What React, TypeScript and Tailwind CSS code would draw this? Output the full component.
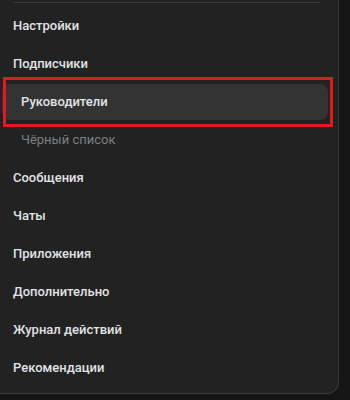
const items: { label: string; sub?: boolean; active?: boolean; muted?: boolean }[] = [
  { label: 'Настройки' },
  { label: 'Подписчики' },
  { label: 'Руководители', sub: true, active: true },
  { label: 'Чёрный список', sub: true, muted: true },
  { label: 'Сообщения' },
  { label: 'Чаты' },
  { label: 'Приложения' },
  { label: 'Дополнительно' },
  { label: 'Журнал действий' },
  { label: 'Рекомендации' },
];

export default function App() {
  return (
    <div className="w-[350px] h-[400px] bg-[#161616] overflow-hidden" style={{ fontFamily: 'Roboto, "Noto Sans", sans-serif' }}>
      <div className="w-[339px] h-[394px] bg-[#222222] border-r border-b border-[#3a3a3a] rounded-br-[12px] pt-[2px] pl-[2px] pr-[10px]">
        <div className="ml-[11px] mr-[8px] h-px bg-[#3a3a3a]" />
        <nav className="mt-[4px] flex flex-col">
          {items.map((it) =>
            it.active ? (
              <div key={it.label} className="relative h-[38px] py-px">
                <div className="h-[36px] rounded-[8px] bg-[#333333] flex items-center pl-[19px] text-[13px] font-medium text-[#e1e3e6]">
                  {it.label}
                </div>
                <div className="absolute left-[1px] right-[-5px] top-[-6px] bottom-[-6px] border-[3px] border-[#e3191c]" />
              </div>
            ) : (
              <div
                key={it.label}
                className={`h-[38px] flex items-center text-[13px] ${
                  it.sub ? 'pl-[19px]' : 'pl-[11px]'
                } ${it.muted ? 'text-[#7d7f82]' : 'font-medium text-[#e1e3e6]'}`}
              >
                {it.label}
              </div>
            )
          )}
        </nav>
      </div>
    </div>
  );
}
